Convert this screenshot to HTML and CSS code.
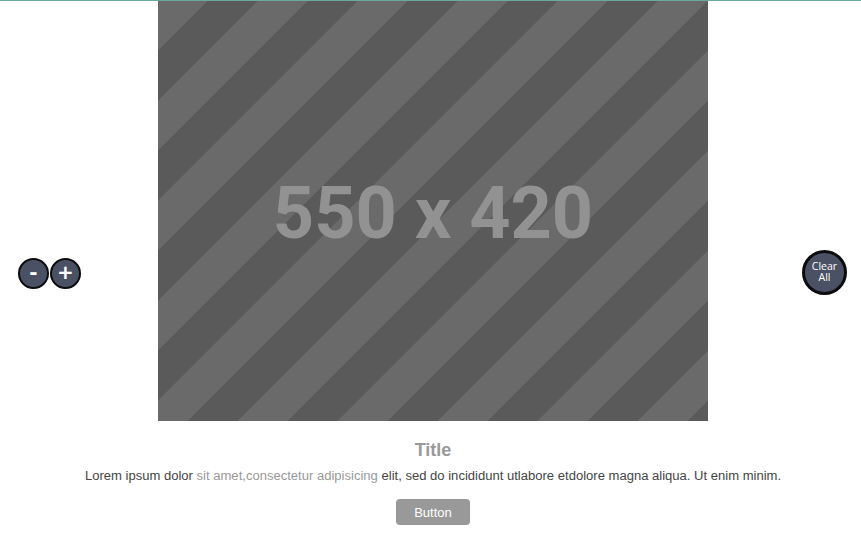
FILE: index.html
```html
<!DOCTYPE html>
<html>
<head>
<meta charset="utf-8">
<link rel="stylesheet" href="styles.css">
</head>
<body>
<div class="topline"></div>
<div class="page">
  <div class="side side-left">
    <button class="zoom-btn">-</button>
    <button class="zoom-btn">+</button>
  </div>
  <div class="main">
    <div class="placeholder"><span class="ph-text">550 x 420</span></div>
    <h2 class="title">Title</h2>
    <p class="desc">Lorem ipsum dolor <span class="muted">sit amet,consectetur adipisicing</span> elit, sed do incididunt utlabore etdolore magna aliqua. Ut enim minim.</p>
    <button class="action">Button</button>
  </div>
  <div class="side side-right">
    <button class="clear-btn"><span class="cl-line">Clear</span><span class="cl-line">All</span></button>
  </div>
</div>
</body>
</html>
```

FILE: styles.css
```css
html, body {
  margin: 0;
  padding: 0;
  background: #fff;
}
body {
  font-family: "Liberation Sans", Arial, sans-serif;
  overflow: hidden;
}
.topline {
  height: 1px;
  background: #6fa6a2;
}
.page {
  display: grid;
  grid-template-columns: 158px 550px 1fr;
  height: 540px;
}
.side {
  display: flex;
  align-items: center;
  padding-top: 4px;
  box-sizing: border-box;
}
.side-left {
  padding-left: 18px;
  gap: 1px;
}
.side-right {
  justify-content: flex-end;
  padding-right: 14px;
  padding-top: 2px;
}
.zoom-btn {
  width: 31px;
  height: 31px;
  border-radius: 50%;
  border: 2px solid #0c0c0e;
  background: #4b5164;
  color: #fff;
  font-family: "DejaVu Sans", sans-serif;
  font-weight: bold;
  font-size: 20px;
  line-height: 1;
  padding: 0 0 2px 0;
  display: flex;
  align-items: center;
  justify-content: center;
  box-sizing: border-box;
}
.clear-btn {
  width: 45px;
  height: 45px;
  border-radius: 50%;
  border: 3px solid #0c0c0e;
  background: #4b5164;
  color: #fff;
  font-family: "Open Sans", sans-serif;
  font-size: 10.5px;
  padding: 0 0 1px 0;
  box-sizing: border-box;
  display: flex;
  flex-direction: column;
  align-items: center;
  justify-content: center;
}
.cl-line {
  display: block;
  line-height: 10.5px;
  height: 10.5px;
}
.main {
  display: flex;
  flex-direction: column;
  align-items: center;
}
.placeholder {
  width: 550px;
  height: 420px;
  background: repeating-linear-gradient(135deg, #6a6a6a 0px, #6a6a6a 35.355px, #5a5a5a 35.355px, #5a5a5a 70.71px);
  display: flex;
  align-items: center;
  justify-content: center;
}
.ph-text {
  font-family: Roboto, sans-serif;
  font-weight: bold;
  font-size: 72px;
  color: #929292;
  margin-top: 4px;
}
.title {
  margin: 19px 0 0;
  font-size: 18px;
  line-height: 20px;
  font-weight: bold;
  color: #999;
}
.desc {
  margin: 8px 0 0;
  font-size: 13.05px;
  line-height: 16px;
  color: #444;
  white-space: nowrap;
}
.muted {
  color: #999;
}
.action {
  margin-top: 15px;
  width: 74px;
  height: 26px;
  border: none;
  border-radius: 4px;
  background: #999;
  color: #fff;
  font-family: "Liberation Sans", Arial, sans-serif;
  font-size: 13px;
  padding: 0;
}
```
